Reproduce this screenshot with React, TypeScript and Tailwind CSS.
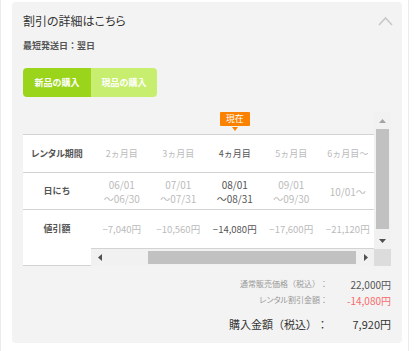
import React from "react";

const cols = [
  { h: "2ヵ月目", d1: "06/01", d2: "～06/30", v: "−7,040円", cur: false },
  { h: "3ヵ月目", d1: "07/01", d2: "～07/31", v: "−10,560円", cur: false },
  { h: "4ヵ月目", d1: "08/01", d2: "～08/31", v: "−14,080円", cur: true },
  { h: "5ヵ月目", d1: "09/01", d2: "～09/30", v: "−17,600円", cur: false },
  { h: "6ヵ月目～", d1: "10/01～", d2: "", v: "−21,120円", cur: false },
];

export default function App() {
  return (
    <div className="w-[414px] h-[351px] bg-white [font-family:'Noto_Sans_CJK_JP',sans-serif] [text-spacing-trim:space-all]">
      <div className="w-[409px] h-[351px] border-l border-r border-[#ececec] pl-[11px] pr-[5px] pt-[2px]">
        <div className="w-[390px] h-[341px] bg-[#f3f3f3] rounded-[4px] px-[11px] pt-[9px]">
          {/* title */}
          <div className="h-[20px] flex items-center justify-between">
            <span className="text-[12px] leading-[20px] text-[#333] [font-feature-settings:'palt']">割引の詳細はこちら</span>
            <svg width="15" height="10" viewBox="0 0 15 10" className="-mr-[2px]">
              <polyline points="1,9 7.5,2 14,9" fill="none" stroke="#c8c8c8" strokeWidth="1.6" />
            </svg>
          </div>
          <div className="mt-[8px] h-[14px] leading-[14px] text-[9px] font-bold text-[#555]">最短発送日：翌日</div>
          {/* tabs */}
          <div className="mt-[15px] flex w-[134px] h-[29px] rounded-[4px] overflow-hidden">
            <div className="w-[68px] bg-[#9ad41b] flex items-center justify-center text-white text-[9px] font-bold">新品の購入</div>
            <div className="w-[66px] bg-[#c7ee6e] flex items-center justify-center text-white text-[9px] font-bold">現品の購入</div>
          </div>
          {/* table */}
          <div className="mt-[15px] flex">
            <div className="w-[68px] flex flex-col">
              <div className="h-[22px]" />
              <div className="bg-white border-t border-b border-[#d3d3d3]">
                <div className="h-[38px] border-b border-[#d3d3d3] flex items-center justify-center text-[9px] font-bold text-[#555] [font-feature-settings:'palt']">レンタル期間</div>
                <div className="h-[37px] border-b border-[#d3d3d3] flex items-center justify-center text-[9px] font-bold text-[#555]">日にち</div>
                <div className="h-[38px] flex items-center justify-center text-[9px] font-bold text-[#555]">値引額</div>
                <div className="h-[17px]" />
              </div>
            </div>
            <div className="w-[300px] flex flex-col">
              <div className="flex">
                <div className="w-[283px] overflow-hidden flex flex-col">
                  {/* badge row */}
                  <div className="h-[22px] flex">
                    <div className="w-[2.5px] shrink-0" />
                    {cols.map((c, i) => (
                      <div key={i} className="w-[56.5px] shrink-0 flex flex-col items-center">
                        {c.cur && (
                          <>
                            <div className="w-[30px] h-[14px] bg-[#fa8200] rounded-[1px] flex items-center justify-center text-white text-[9px] leading-[14px]">現在</div>
                            <svg width="6" height="4" viewBox="0 0 6 4" className="mt-[1px]">
                              <polygon points="0,0 6,0 3,4" fill="#fa8200" />
                            </svg>
                          </>
                        )}
                      </div>
                    ))}
                  </div>
                  <div className="bg-white border-t border-b border-[#d3d3d3]">
                    <div className="h-[38px] border-b border-[#d3d3d3] flex">
                      <div className="w-[2.5px] shrink-0" />
                      {cols.map((c, i) => (
                        <div key={i} className={`w-[56.5px] shrink-0 flex items-center justify-center text-[9px] ${c.cur ? "text-[#555]" : "text-[#bbb]"}`}>{c.h}</div>
                      ))}
                    </div>
                    <div className="h-[37px] border-b border-[#d3d3d3] flex">
                      <div className="w-[2.5px] shrink-0" />
                      {cols.map((c, i) => (
                        <div key={i} className={`w-[56.5px] shrink-0 flex flex-col items-center justify-center text-[10px] leading-[14px] pt-[2px] ${c.cur ? "text-[#555]" : "text-[#bbb]"}`}>
                          <span>{c.d1}</span>
                          {c.d2 && <span>{c.d2}</span>}
                        </div>
                      ))}
                    </div>
                    <div className="h-[38px] flex">
                      <div className="w-[2.5px] shrink-0" />
                      {cols.map((c, i) => (
                        <div key={i} className={`w-[56.5px] shrink-0 flex items-center justify-center text-[9.5px] ${c.cur ? "text-[#555]" : "text-[#bbb]"}`}>{c.v}</div>
                      ))}
                    </div>
                  </div>
                </div>
                {/* vertical scrollbar */}
                <div className="w-[17px] bg-[#f1f1f1] flex flex-col">
                  <div className="h-[17px] flex items-center justify-center">
                    <svg width="7" height="4" viewBox="0 0 7 4"><polygon points="0,4 7,4 3.5,0" fill="#a3a3a3" /></svg>
                  </div>
                  <div className="flex-1 px-[2px]">
                    <div className="h-[100px] bg-[#c1c1c1]" />
                  </div>
                  <div className="h-[17px] flex items-center justify-center">
                    <svg width="7" height="4" viewBox="0 0 7 4"><polygon points="0,0 7,0 3.5,4" fill="#505050" /></svg>
                  </div>
                </div>
              </div>
              {/* horizontal scrollbar */}
              <div className="flex h-[17px]">
                <div className="w-[283px] bg-[#f1f1f1] flex">
                  <div className="w-[17px] flex items-center justify-center">
                    <svg width="4" height="7" viewBox="0 0 4 7"><polygon points="4,0 4,7 0,3.5" fill="#505050" /></svg>
                  </div>
                  <div className="flex-1 py-[2px]">
                    <div className="ml-[40px] w-[208px] h-full bg-[#c1c1c1]" />
                  </div>
                  <div className="w-[17px] flex items-center justify-center">
                    <svg width="4" height="7" viewBox="0 0 4 7"><polygon points="0,0 0,7 4,3.5" fill="#505050" /></svg>
                  </div>
                </div>
                <div className="w-[17px] bg-[#dcdcdc]" />
              </div>
            </div>
          </div>
          {/* summary */}
          <div className="mt-[10px] flex flex-col">
            <div className="h-[16px] flex items-center justify-end">
              <span className="text-[8px] text-[#999]">通常販売価格（税込）：</span>
              <span className="w-[63px] text-right text-[10px] text-[#555]">22,000円</span>
            </div>
            <div className="h-[16px] flex items-center justify-end">
              <span className="text-[8px] text-[#999]"><span className="[font-feature-settings:'palt']">レンタル割引金額</span>：</span>
              <span className="w-[63px] text-right text-[10px] text-[#f76b6b]">-14,080円</span>
            </div>
            <div className="mt-[5px] h-[22px] flex items-center justify-end">
              <span className="text-[11px] text-[#333]">購入金額（税込）：</span>
              <span className="w-[63px] text-right text-[11px] text-[#333]">7,920円</span>
            </div>
          </div>
        </div>
      </div>
    </div>
  );
}
